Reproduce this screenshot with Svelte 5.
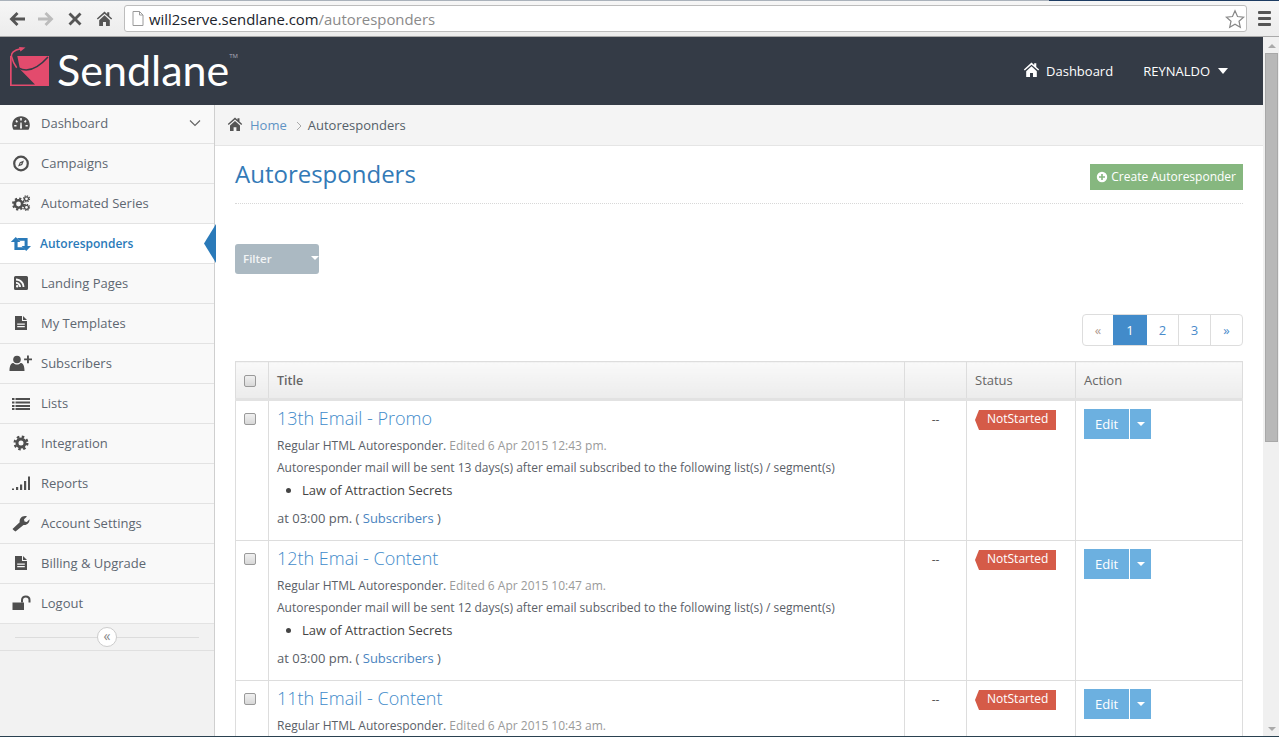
<script lang="ts">
  // Sendlane autoresponders page inside a Chrome window
  const nav = [
    { label: 'Dashboard', icon: 'gauge', chevron: true },
    { label: 'Campaigns', icon: 'compass' },
    { label: 'Automated Series', icon: 'gears' },
    { label: 'Autoresponders', icon: 'retweet', active: true },
    { label: 'Landing Pages', icon: 'rss' },
    { label: 'My Templates', icon: 'file' },
    { label: 'Subscribers', icon: 'useradd' },
    { label: 'Lists', icon: 'list' },
    { label: 'Integration', icon: 'gear' },
    { label: 'Reports', icon: 'signal' },
    { label: 'Account Settings', icon: 'wrench' },
    { label: 'Billing & Upgrade', icon: 'file' },
    { label: 'Logout', icon: 'unlock' },
  ];

  const rows = [
    { title: '13th Email - Promo', edited: '6 Apr 2015 12:43 pm.', days: 13 },
    { title: '12th Emai - Content', edited: '6 Apr 2015 10:47 am.', days: 12 },
    { title: '11th Email - Content', edited: '6 Apr 2015 10:43 am.', days: 11 },
  ];

  const HOME = 'M8 1.5 0.8 8l.9 1L8 3.5 14.3 9l.9-1-2.7-2.4V2.2h-2v1.6zM3 9.6V15h3.6v-3.8h2.8V15H13V9.6L8 4.9z';
</script>

{#snippet icon(name)}
  <svg class="nav-icon" viewBox="0 0 20 16" aria-hidden="true">
    {#if name === 'gauge'}
      <path fill-rule="evenodd" d="M10 1.200C4.800 1.200 1.200 5 1.200 10c0 1.800.5 3.400 1.300 4.800h15c.8-1.400 1.300-3 1.300-4.800 0-5-3.600-8.800-8.800-8.800zM9.200 3h1.600v2.400H9.200zM4.300 6l1.400-1 1.300 1.700-1.300 1zM3.200 10h2.300v1.500H3.200zM14.500 10h2.300v1.500h-2.300zM9 13.500l.4-6h1.200l.4 6zM13 6.700l1.300-1.700 1.400 1-1.400 1.700z" />
    {:else if name === 'compass'}
      <circle cx="10" cy="8.500" r="6.800" fill="none" stroke="currentColor" stroke-width="2.200" />
      <path d="M13 5.500 11.200 10 7 11.500 8.800 7.200zM9.500 8.200l-.5 1.300 1.300-.5.400-1.300z" fill-rule="evenodd" />
    {:else if name === 'gears'}
      <circle cx="7.500" cy="9" r="3.700" fill="none" stroke="currentColor" stroke-width="2.600" />
      <circle cx="7.500" cy="9" r="5.500" fill="none" stroke="currentColor" stroke-width="2" stroke-dasharray="2.200 2.120" />
      <circle cx="15.500" cy="3.800" r="2" fill="none" stroke="currentColor" stroke-width="1.200" />
      <circle cx="15.500" cy="3.800" r="3" fill="none" stroke="currentColor" stroke-width="1.200" stroke-dasharray="1.300 1.050" />
      <circle cx="15.500" cy="12.300" r="2" fill="none" stroke="currentColor" stroke-width="1.200" />
      <circle cx="15.500" cy="12.300" r="3" fill="none" stroke="currentColor" stroke-width="1.200" stroke-dasharray="1.300 1.050" />
    {:else if name === 'retweet'}
      <path d="M4.800 1 9.400 6H6.600V11.200H12L14.300 14H3.400V6H-.2z" />
      <path d="M6 2H16.600V10H20L15.200 15 10.600 10H13.600V4.800H8.200z" />
    {:else if name === 'rss'}
      <path fill-rule="evenodd" d="M4.500 1h11A1.500 1.500 0 0 1 17 2.500v11a1.500 1.500 0 0 1-1.500 1.500h-11A1.500 1.500 0 0 1 3 13.500v-11A1.500 1.500 0 0 1 4.500 1zM5 3.600v1.800c3.500 0 6.600 2.800 6.600 6.600h1.800C13.400 7.300 9.700 3.600 5 3.600zM5 7v1.800c1.800 0 3.200 1.400 3.200 3.200H10C10 9.200 7.800 7 5 7zM6.200 10a1.200 1.200 0 1 0 0 2.500 1.200 1.200 0 0 0 0-2.500z" />
    {:else if name === 'file'}
      <path fill-rule="evenodd" d="M4 1h7v5h5v9H4zM12 1l4 4h-4zM6.200 8.500v1.300h7.600V8.500zM6.200 11v1.300h7.600V11z" />
    {:else if name === 'useradd'}
      <circle cx="6" cy="4.500" r="3.800" />
      <path d="M-1.500 16c0-5.500 1.500-8 4-8 1 1 2.200 1.500 3.500 1.500S8.500 9 9.500 8c2.500 0 4 2.500 4 8zM16 .5h1.900v2.900H21v1.900h-3.100v2.900H16V5.300h-2.900V3.400H16z" />
    {:else if name === 'list'}
      <path d="M1 3h2.500v2H1zM4.500 3H19v2H4.500zM1 6.500h2.500v2H1zM4.500 6.500H19v2H4.500zM1 10h2.500v2H1zM4.500 10H19v2H4.500zM1 13h2.500v2H1zM4.500 13H19v2H4.500z" />
    {:else if name === 'gear'}
      <circle cx="10" cy="8" r="4" fill="none" stroke="currentColor" stroke-width="3" />
      <circle cx="10" cy="8" r="6.300" fill="none" stroke="currentColor" stroke-width="2.400" stroke-dasharray="2.500 2.450" />
    {:else if name === 'signal'}
      <path d="M1 13.500h2V15H1zM5 12h2.200v3H5zM9 9.500h2.200V15H9zM13 6h2.200v9H13zM17 1.500h2V15h-2z" />
    {:else if name === 'wrench'}
      <path d="M3 15.500 1.500 14l7.200-6.800C8.200 4 10.500 1 14 1c1 0 1.800.3 2 .5L13 4.200l.5 2.300 2.300.5 2.700-2.700c.3 3.500-2.500 6.200-6 5.700L4.500 16.500z" />
    {:else if name === 'unlock'}
      <path d="M1.500 7.500h11.500v7.500H1.500z" />
      <path d="M11 7.500V5c0-4.800 7.500-4.800 7.500 0v2.500" fill="none" stroke="currentColor" stroke-width="2" />
    {/if}
  </svg>
{/snippet}

<div class="window">
  <div class="window-top"><span></span><span class="dark"></span></div>

  <div class="toolbar">
    <svg class="tool" viewBox="0 0 20 20" aria-hidden="true"><path d="M9.500 3 2.500 10l7 7 2-2-3.500-3.500h10v-3H8L11.500 5z" fill="#555" /></svg>
    <svg class="tool" viewBox="0 0 20 20" aria-hidden="true"><path d="M10.500 3l7 7-7 7-2-2 3.500-3.500H2v-3h10L8.500 5z" fill="#bcbcbc" /></svg>
    <svg class="tool" viewBox="0 0 20 20" aria-hidden="true"><path d="M3.500 5.500 5.500 3.500 10 8 14.500 3.500 16.500 5.500 12 10 16.500 14.500 14.500 16.500 10 12 5.500 16.500 3.500 14.500 8 10z" fill="#555" /></svg>
    <svg class="tool" viewBox="0 0 16 16" aria-hidden="true"><path d={HOME} fill="#555" /></svg>
    <div class="omnibox">
      <svg class="page-icon" viewBox="0 0 12 15" aria-hidden="true"><path d="M1 .5h6.500L11 4v10.500H1zM7.500.5V4H11" fill="#fff" stroke="#9a9a9a" /></svg>
      <span class="url">will2serve.sendlane.com<em>/autoresponders</em></span>
      <svg class="star" viewBox="0 0 20 20" aria-hidden="true"><path d="M10 1.800 12.500 7.500 18.600 8.100 14 12.200 15.300 18.300 10 15.200 4.700 18.300 6 12.200 1.400 8.100 7.500 7.500z" fill="#fff" stroke="#888" stroke-width="1.200" /></svg>
    </div>
    <div class="hamburger"><i></i><i></i><i></i></div>
  </div>

  <div class="viewport">
    <div class="page">
      <header class="topbar">
        <div class="logo">
          <svg class="logo-mark" viewBox="0 0 40 40" aria-hidden="true">
            <path d="M0 9h39v30H0z" fill="#e34b6d" />
            <path d="M1.700 9H7.300L10 22.300 25 37.500H1.700z" fill="#343b46" />
            <path d="M8.500 21Q22 28 38 10" fill="none" stroke="#343b46" stroke-width="1.500" />
            <path d="M10.700 1.800C4 3 .5 6 1.700 10c.8 3.500 3 8 5 10.700" fill="none" stroke="#e34b6d" stroke-width="1.500" />
            <path d="M15.500.5 9 0l1.500 4.500z" fill="#e34b6d" />
          </svg>
          <span class="logo-name">Sendlane</span>
          <span class="logo-tm">TM</span>
        </div>
        <nav class="top-links">
          <a class="top-link"><svg viewBox="0 0 16 16" aria-hidden="true"><path d={HOME} fill="#fff" /></svg>Dashboard</a>
          <a class="top-link user">REYNALDO<b></b></a>
        </nav>
      </header>

      <div class="columns">
        <aside class="sidebar">
          {#each nav as item}
            <a class="nav-item" class:active={item.active}>
              {@render icon(item.icon)}
              <span>{item.label}</span>
              {#if item.chevron}
                <svg class="chevron" viewBox="0 0 12 8" aria-hidden="true"><path d="M1 1.500 6 6.500 11 1.500" fill="none" stroke="#666" stroke-width="1.200" /></svg>
              {/if}
              {#if item.active}<i class="active-mark"></i>{/if}
            </a>
          {/each}
          <div class="collapse">
            <button class="collapse-btn">«</button>
          </div>
        </aside>

        <main class="content">
          <div class="breadcrumb">
            <svg viewBox="0 0 16 16" aria-hidden="true"><path d={HOME} fill="#555" /></svg>
            <a>Home</a>
            <svg class="crumb-sep" viewBox="0 0 6 10" aria-hidden="true"><path d="M1 1l4 4-4 4" fill="none" stroke="#aaa" /></svg>
            <span>Autoresponders</span>
          </div>

          <div class="body">
            <div class="page-head">
              <h1>Autoresponders</h1>
              <button class="create">
                <svg viewBox="0 0 12 12" aria-hidden="true"><path fill-rule="evenodd" d="M6 .8a5.200 5.200 0 1 0 0 10.400A5.200 5.200 0 0 0 6 .8zM5.200 3h1.600v2.200H9v1.600H6.800V9H5.200V6.800H3V5.200h2.200z" fill="#fff" /></svg>
                Create Autoresponder
              </button>
            </div>

            <button class="filter">Filter<b></b></button>

            <div class="pager-row">
              <div class="pager">
                <a class="muted">«</a>
                <a class="current">1</a>
                <a>2</a>
                <a>3</a>
                <a>»</a>
              </div>
            </div>

            <table>
              <colgroup>
                <col style="width:33px" />
                <col />
                <col style="width:62px" />
                <col style="width:109px" />
                <col style="width:167px" />
              </colgroup>
              <thead>
                <tr>
                  <th class="check"><i class="checkbox"></i></th>
                  <th>Title</th>
                  <th></th>
                  <th>Status</th>
                  <th>Action</th>
                </tr>
              </thead>
              <tbody>
                {#each rows as row}
                  <tr>
                    <td class="check"><i class="checkbox"></i></td>
                    <td class="main-cell">
                      <a class="row-title">{row.title}</a>
                      <p class="meta">Regular HTML Autoresponder. <span>Edited {row.edited}</span></p>
                      <p class="meta sent">Autoresponder mail will be sent {row.days} days(s) after email subscribed to the following list(s) / segment(s)</p>
                      <ul><li>Law of Attraction Secrets</li></ul>
                      <p class="at">at 03:00 pm. ( <a>Subscribers</a> )</p>
                    </td>
                    <td class="dash">--</td>
                    <td class="status"><span class="tag">NotStarted</span></td>
                    <td class="action">
                      <div class="split"><button>Edit</button><button class="caret-btn"><b></b></button></div>
                    </td>
                  </tr>
                {/each}
              </tbody>
            </table>
          </div>
        </main>
      </div>
    </div>

    <div class="scrollbar">
      <i class="arrow up"></i>
      <div class="thumb"></div>
      <i class="arrow down"></i>
    </div>
  </div>

  <div class="window-bottom"></div>
</div>

<style>
  :global(body) {
    margin: 0;
    overflow: hidden;
    font-family: 'Open Sans', 'Liberation Sans', sans-serif;
  }

  .window {
    display: flex;
    flex-direction: column;
    height: 737px;
    overflow: hidden;
    background: #fff;
  }

  .window-top {
    display: flex;
    height: 1px;
    flex: none;
    background: #aab2bb;
  }
  .window-top span { flex: 1; }
  .window-top .dark { flex: none; width: 230px; background: #1d3c63; }

  .toolbar {
    flex: none;
    display: flex;
    align-items: center;
    height: 36px;
    box-sizing: border-box;
    padding: 0 8px 0 7px;
    background: linear-gradient(#f6f6f6, #ececec);
    border-bottom: 1px solid #a9a9a9;
  }
  .tool { width: 20px; height: 20px; margin-right: 9px; }
  .tool:nth-child(4) { margin-right: 11px; width: 17px; height: 17px; margin-left: 2px; }

  .omnibox {
    flex: 1;
    display: flex;
    align-items: center;
    height: 25px;
    margin-right: 11px;
    padding: 0 1px 0 7px;
    background: #fff;
    border: 1px solid #bdbdbd;
    border-radius: 3px;
  }
  .page-icon { width: 12px; height: 15px; margin-right: 5px; }
  .url { flex: 1; font-size: 14.900px; color: #20242c; white-space: nowrap; }
  .url em { font-style: normal; color: #8a8a8a; }
  .star { width: 20px; height: 20px; }

  .hamburger { display: flex; flex-direction: column; gap: 3px; width: 13px; }
  .hamburger i { height: 3px; background: #555; border-radius: 1px; }

  .viewport { flex: 1; min-height: 0; display: flex; }
  .page { flex: 1; min-width: 0; display: flex; flex-direction: column; }

  .topbar {
    flex: none;
    display: flex;
    align-items: center;
    justify-content: space-between;
    height: 68px;
    padding: 0 35px 0 10px;
    background: #343b46;
  }

  .logo { display: flex; align-items: center; height: 100%; }
  .logo-mark { width: 40px; height: 40px; margin-top: -8px; }
  .logo-name {
    margin-left: 7px;
    margin-top: -3px;
    font-family: Lato, sans-serif;
    font-weight: 400;
    font-size: 43px;
    color: #fff;
  }
  .logo-tm { align-self: flex-start; margin-top: 15px; font-size: 6px; color: #aab; }

  .top-links { display: flex; gap: 30px; margin-top: -1px; }
  .top-link { display: flex; align-items: center; font-size: 13px; color: #fff; }
  .top-link svg { width: 17px; height: 17px; margin-right: 6px; margin-top: -3px; }
  .top-link.user b {
    margin-left: 8px;
    border: 5.500px solid transparent;
    border-top: 6px solid #fff;
    border-bottom: 0;
  }

  .columns { flex: 1; min-height: 0; display: flex; }

  .sidebar {
    flex: none;
    width: 214px;
    background: #f2f2f2;
    border-right: 1px solid #cfcfcf;
  }

  .nav-item {
    display: flex;
    align-items: center;
    position: relative;
    box-sizing: border-box;
    height: 40px;
    padding: 0 0 2px 11px;
    background: #f9f9f9;
    border-bottom: 1px solid #e3e3e3;
    font-size: 13px;
    color: #5e6771;
  }
  .nav-item:first-child { height: 39px; padding-bottom: 3px; }
  .nav-item span { margin-left: 10px; }
  .nav-icon { width: 20px; height: 16px; flex: none; fill: #4f4f4f; color: #4f4f4f; overflow: visible; }
  .chevron { width: 12px; height: 8px; margin-left: auto; margin-right: 13px; }

  .nav-item.active { padding-bottom: 0; background: #fff; color: #2a7ab9; font-weight: 600; font-size: 12px; }
  .nav-item.active .nav-icon { fill: #2a7ab9; color: #2a7ab9; }
  .nav-item.active span { margin-left: 9px; }
  .active-mark {
    position: absolute;
    right: -2px;
    top: 0;
    width: 12px;
    height: 39px;
    background: #2a7ab9;
    clip-path: polygon(100% 0, 100% 100%, 0 50%);
  }

  .collapse {
    display: flex;
    align-items: center;
    justify-content: center;
    height: 26px;
    border-bottom: 1px solid #e0e0e0;
    background: linear-gradient(#dcdcdc, #dcdcdc) center / 184px 1px no-repeat;
  }
  .collapse-btn {
    width: 20px;
    height: 20px;
    padding: 0 0 3px;
    border: 1px solid #ccc;
    border-radius: 50%;
    background: #fff;
    color: #888;
    font: 14px/1 'Open Sans', sans-serif;
  }

  .content { flex: 1; min-width: 0; overflow: hidden; }

  .breadcrumb {
    display: flex;
    align-items: center;
    height: 40px;
    padding-left: 12px;
    background: #f4f4f4;
    border-bottom: 1px solid #e5e5e5;
    font-size: 13px;
    color: #555f69;
  }
  .breadcrumb svg { width: 16px; height: 16px; margin-right: 7px; margin-top: -3px; }
  .breadcrumb a { color: #5f93c4; }
  .breadcrumb .crumb-sep { width: 6px; height: 10px; margin: 1px 6px 0 9px; }

  .body { padding: 0 20px; }

  .page-head {
    display: flex;
    align-items: flex-start;
    justify-content: space-between;
    height: 57px;
    border-bottom: 1px dotted #d8d8d8;
  }
  h1 {
    margin: 11px 0 0;
    font-size: 24px;
    font-weight: 400;
    line-height: 33px;
    color: #337ab7;
  }
  .create {
    display: flex;
    align-items: center;
    gap: 3px;
    height: 26px;
    margin-top: 18px;
    padding: 0 7px 1px 6px;
    border: 0;
    background: #86b77f;
    color: #fff;
    font: 12px 'Open Sans', sans-serif;
  }
  .create svg { width: 12px; height: 12px; }

  .filter {
    display: flex;
    align-items: center;
    justify-content: space-between;
    width: 84px;
    height: 30px;
    margin-top: 40px;
    padding: 0 0 2px 8px;
    border: 0;
    border-radius: 3px;
    background: #abb9c2;
    color: #f2f4f5;
    font: 600 11.500px 'Open Sans', sans-serif;
  }
  .filter b {
    border: 4px solid transparent;
    border-top: 4px solid #fff;
    border-bottom: 0;
  }

  .pager-row { display: flex; justify-content: flex-end; margin-top: 40px; }
  .pager {
    display: flex;
    height: 30px;
    border: 1px solid #ddd;
    border-radius: 4px;
    overflow: hidden;
  }
  .pager a {
    display: flex;
    align-items: center;
    justify-content: center;
    width: 31px;
    border-left: 1px solid #ddd;
    font-size: 13px;
    color: #4a8bcb;
  }
  .pager a:first-child { border-left: 0; width: 30px; }
  .pager a:nth-child(3) { border-left: 0; }
  .pager a.muted { color: #b09a8e; }
  .pager a.current { width: 34px; background: #428bca; color: #fff; border-left: 0; }

  table {
    width: 100%;
    margin-top: 15px;
    table-layout: fixed;
    border-collapse: collapse;
    font-size: 13px;
    color: #555;
  }
  th, td { border: 1px solid #ddd; padding: 0; vertical-align: top; }
  th {
    height: 36px;
    padding-left: 8px;
    border-bottom: 3px solid #e2e2e2;
    background: linear-gradient(#f9f9f9, #ececec);
    vertical-align: middle;
    text-align: left;
    font-weight: 600;
    font-size: 12.500px;
    color: #666;
  }
  th:nth-child(n+4) { font-weight: 400; font-size: 13px; }
  th.check, td.check { padding: 0; text-align: center; }
  /* this cell sets the row pitch: 139 + 1px collapsed border */
  td.check { height: 139px; }

  .checkbox {
    display: inline-block;
    box-sizing: border-box;
    width: 12px;
    height: 12px;
    margin-right: 5px;
    border: 1px solid #9a9a9a;
    border-radius: 2px;
    background: linear-gradient(#f0f0f0, #d8d8d8);
    vertical-align: middle;
  }
  td.check .checkbox { margin-top: 12px; }

  .main-cell { padding: 7px 8px 0; }
  .row-title {
    display: block;
    height: 21px;
    font-size: 18px;
    font-weight: 300;
    line-height: 21px;
    color: #428bca;
  }
  p { margin: 0; }
  .meta { margin-top: 9px; font-size: 12px; line-height: 16px; color: #5a6067; }
  .meta span { color: #9a9a9a; }
  .meta.sent { margin-top: 6px; }
  ul { margin: 6px 0 0; padding-left: 25px; font-size: 13px; line-height: 16px; color: #444; }
  .at { margin-top: 12px; font-size: 13px; line-height: 16px; color: #5a6067; }
  .at a { color: #4a84c0; }

  .dash { padding-top: 10px; text-align: center; color: #555; font-size: 12px; }
  .status { padding: 9px 0 0 8px; }
  .tag {
    display: block;
    width: 81px;
    height: 20px;
    box-sizing: border-box;
    padding-left: 12px;
    background: #d55b48;
    clip-path: polygon(4px 0, 100% 0, 100% 100%, 4px 100%, 0 50%);
    font-size: 12px;
    line-height: 18px;
    color: #fff;
  }
  .action { padding: 8px 0 0 8px; }
  .split { display: flex; gap: 1px; }
  .split button {
    height: 30px;
    width: 45px;
    padding: 0;
    border: 0;
    background: #6cb0e0;
    color: #fff;
    font: 13px 'Open Sans', sans-serif;
  }
  .split .caret-btn { display: flex; align-items: center; justify-content: center; width: 21px; }
  .caret-btn b { border: 4px solid transparent; border-top: 4px solid #fff; border-bottom: 0; }

  .scrollbar {
    flex: none;
    display: flex;
    flex-direction: column;
    align-items: center;
    box-sizing: border-box;
    width: 16px;
    padding: 7px 1px 0 2px;
    background: #f0f0f0;
  }
  .arrow { border: 4px solid transparent; }
  .arrow.up { border-top: 0; border-bottom: 4px solid #aaa; }
  .arrow.down { margin-top: auto; margin-bottom: 5px; border-bottom: 0; border-top: 4px solid #aaa; }
  .thumb {
    width: 100%;
    height: 389px;
    margin-top: 5px;
    box-sizing: border-box;
    background: #b8b8b8;
    border: 1px solid #a8a8a8;
  }

  .window-bottom { flex: none; height: 1px; background: #2a4150; }
</style>
